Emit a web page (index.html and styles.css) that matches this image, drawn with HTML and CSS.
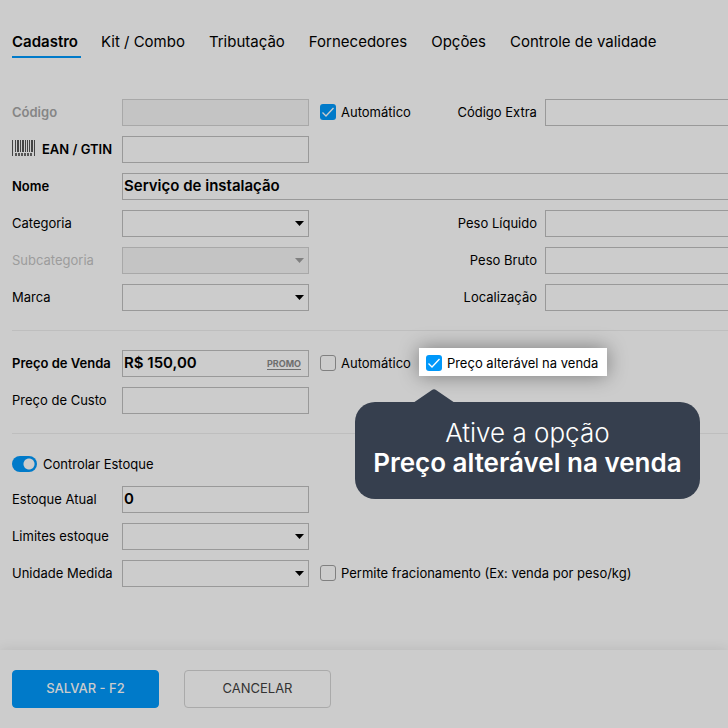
FILE: index.html
```html
<!DOCTYPE html>
<html lang="pt-BR">
<head>
<meta charset="utf-8">
<meta name="viewport" content="width=device-width, initial-scale=1">
<title>Cadastro de produto</title>
<link rel="stylesheet" href="styles.css">
</head>
<body>
<form class="page">
  <nav class="tabs">
    <a class="tab tab-active" href="#cadastro">Cadastro</a>
    <a class="tab" href="#kit">Kit / Combo</a>
    <a class="tab" href="#tributacao">Tributação</a>
    <a class="tab" href="#fornecedores">Fornecedores</a>
    <a class="tab" href="#opcoes">Opções</a>
    <a class="tab" href="#validade">Controle de validade</a>
  </nav>

  <section class="group">
    <div class="row">
      <label class="label label-muted" for="codigo">Código</label>
      <input class="field" id="codigo" type="text" disabled>
      <div class="option">
        <label class="check"><input class="box" type="checkbox" checked>Automático</label>
      </div>
      <label class="label-end" for="extra">Código Extra</label>
      <input class="field-side" id="extra" type="text">
    </div>
    <div class="row">
      <label class="label label-strong label-icon" for="ean">
        <svg class="barcode" viewBox="0 0 23 17" aria-hidden="true">
          <path d="M.5 0v16M22.5 0v16" stroke="#444"/>
          <path d="M3 0h1v12H3zM5 0h2v12H5zM8 0h1v12H8zM10 0h2v12h-2zM13 0h1v12h-1zM15 0h1v12h-1zM17 0h1v12h-1zM19 0h2v12h-2z" fill="#444"/>
          <path d="M3 14.5h17" stroke="#555" stroke-width="3" stroke-dasharray="2 1"/>
        </svg>
        EAN / GTIN
      </label>
      <input class="field" id="ean" type="text">
    </div>
    <div class="row">
      <label class="label label-strong" for="nome">Nome</label>
      <input class="field field-wide" id="nome" type="text" value="Serviço de instalação">
    </div>
    <div class="row">
      <label class="label" for="categoria">Categoria</label>
      <select class="field" id="categoria"></select>
      <label class="label-end label-far" for="liquido">Peso Líquido</label>
      <input class="field-side" id="liquido" type="text">
    </div>
    <div class="row">
      <label class="label label-disabled" for="subcategoria">Subcategoria</label>
      <select class="field" id="subcategoria" disabled></select>
      <label class="label-end label-far" for="bruto">Peso Bruto</label>
      <input class="field-side" id="bruto" type="text">
    </div>
    <div class="row">
      <label class="label" for="marca">Marca</label>
      <select class="field" id="marca"></select>
      <label class="label-end label-far" for="local">Localização</label>
      <input class="field-side" id="local" type="text">
    </div>
  </section>

  <section class="group group-ruled">
    <div class="row">
      <label class="label label-strong" for="venda">Preço de Venda</label>
      <div class="price">
        <input class="field" id="venda" type="text" value="R$ 150,00">
        <a class="promo" href="#promo">PROMO</a>
      </div>
      <div class="option">
        <label class="check"><input class="box" type="checkbox">Automático</label>
      </div>
      <div class="spot">
        <label class="check"><input class="box" type="checkbox" checked>Preço alterável na venda</label>
        <div class="tip" role="tooltip">
          <svg class="tip-arrow" viewBox="0 0 42 14" aria-hidden="true"><path d="M0 14 19 1q2-1.500 4 0l19 13z" fill="#363f4e"/></svg>
          Ative a opção<br><strong>Preço alterável na venda</strong>
        </div>
      </div>
    </div>
    <div class="row">
      <label class="label" for="custo">Preço de Custo</label>
      <input class="field" id="custo" type="text">
    </div>
  </section>

  <section class="group group-ruled group-stock">
    <label class="switch"><input class="toggle" type="checkbox" role="switch" checked>Controlar Estoque</label>
    <div class="row">
      <label class="label" for="estoque">Estoque Atual</label>
      <input class="field" id="estoque" type="text" value="0">
    </div>
    <div class="row">
      <label class="label" for="limites">Limites estoque</label>
      <select class="field" id="limites"></select>
    </div>
    <div class="row">
      <label class="label" for="unidade">Unidade Medida</label>
      <select class="field" id="unidade"></select>
      <div class="option">
        <label class="check"><input class="box" type="checkbox">Permite fracionamento (Ex: venda por peso/kg)</label>
      </div>
    </div>
  </section>

  <footer class="actions">
    <button class="button button-primary" type="submit">SALVAR - F2</button>
    <button class="button" type="button">CANCELAR</button>
  </footer>
</form>
</body>
</html>
```
FILE: styles.css
```css
* {
  box-sizing: border-box;
}

body {
  margin: 0;
  background: #ccc;
  color: #000;
  font: 13px/16px Inter, "Liberation Sans", sans-serif;
}

.page {
  display: flex;
  flex-direction: column;
  min-height: 100vh;
  overflow: hidden;
}

.tabs {
  display: flex;
  gap: 24px;
  padding: 32px 12px 0;
}

.tab {
  padding-bottom: 4px;
  border-bottom: 2px solid transparent;
  color: #000;
  font-size: 15px;
  line-height: 20px;
  text-decoration: none;
  white-space: nowrap;
}

.tab-active {
  margin-right: -4px;
  padding-right: 3px;
  border-color: #007ac9;
  font-weight: 600;
}

.group {
  display: flex;
  flex-direction: column;
  gap: 10px;
  margin: 0 -1px 0 12px;
  padding: 41px 0 19px;
}

.group-ruled {
  padding-top: 19px;
  border-top: 1px solid #bebebe;
}

.group-stock {
  padding-top: 22px;
}

.row {
  display: flex;
  align-items: center;
  height: 27px;
}

.label,
.label-end,
.option {
  flex: none;
  padding-bottom: 2px;
  white-space: nowrap;
}

.label {
  width: 110px;
}

.label-strong {
  font-weight: 600;
}

.label-muted {
  color: #858585;
  font-weight: 600;
}

.label-disabled {
  color: #9c9c9c;
}

.label-icon {
  display: flex;
  align-items: center;
  gap: 7px;
}

.barcode {
  width: 23px;
  height: 17px;
}

.label-end {
  width: 134px;
  padding-right: 8px;
  text-align: right;
}

.label-far {
  width: 236px;
}

.field,
.field-side {
  height: 27px;
  margin: 0;
  padding: 0 1px 2px;
  border: 1px solid #999;
  border-radius: 0;
  background: transparent;
  color: #000;
  font: 600 15px/20px Inter, "Liberation Sans", sans-serif;
}

.field {
  flex: none;
  width: 187px;
}

.field-wide,
.field-side {
  flex: 1;
  min-width: 0;
}

.field:disabled {
  border-color: #a8a8a8;
  background-color: #c4c4c4;
  opacity: 1;
}

select.field {
  appearance: none;
  background: url("data:image/svg+xml,%3Csvg xmlns='http://www.w3.org/2000/svg' width='9' height='5'%3E%3Cpath d='M0 0h9L4.500 5z'/%3E%3C/svg%3E") no-repeat right 4px center;
}

select.field:disabled {
  background: #c4c4c4 url("data:image/svg+xml,%3Csvg xmlns='http://www.w3.org/2000/svg' width='9' height='5'%3E%3Cpath d='M0 0h9L4.500 5z' fill='%23808080'/%3E%3C/svg%3E") no-repeat right 4px center;
}

.price {
  position: relative;
  display: flex;
}

.promo {
  position: absolute;
  top: 7px;
  right: 8px;
  color: #6e6e6e;
  font-size: 9px;
  font-weight: 700;
  line-height: 14px;
  text-underline-offset: 2px;
}

.option {
  margin-left: 11px;
}

.check {
  display: flex;
  align-items: center;
  gap: 5px;
  white-space: nowrap;
}

.box {
  appearance: none;
  width: 16px;
  height: 16px;
  margin: 0;
  border: 1px solid #808080;
  border-radius: 3px;
}

.box:checked {
  border: 0;
  background: #007ac9 url("data:image/svg+xml,%3Csvg xmlns='http://www.w3.org/2000/svg' width='16' height='16'%3E%3Cpath d='M2.500 8.500 6 12l7.500-8' fill='none' stroke='%23ccc' stroke-width='1.300'/%3E%3C/svg%3E") center;
}

.spot {
  position: relative;
  margin: 0 0 3px 8px;
  padding: 7px 9px 5px 7px;
  background: #fff;
  box-shadow: 0 0 20px rgba(0, 0, 0, 0.4);
}

.spot .box {
  background: #0098fa url("data:image/svg+xml,%3Csvg xmlns='http://www.w3.org/2000/svg' width='16' height='16'%3E%3Cpath d='M2.500 8.500 6 12l7.500-8' fill='none' stroke='white' stroke-width='1.300'/%3E%3C/svg%3E") center;
}

.tip {
  position: absolute;
  top: 54px;
  left: -64px;
  z-index: 1;
  width: 345px;
  padding: 16px 0 21px;
  border-radius: 20px;
  background: #363f4e;
  color: #fff;
  font-size: 26px;
  font-weight: 300;
  line-height: 30px;
  text-align: center;
  white-space: nowrap;
}

.tip strong {
  font-weight: 600;
}

.tip-arrow {
  position: absolute;
  top: -13px;
  left: 58px;
  width: 42px;
  height: 14px;
}

.switch {
  display: flex;
  align-items: center;
  gap: 6px;
  margin-bottom: 4px;
}

.toggle {
  appearance: none;
  width: 25px;
  height: 16px;
  margin: 0;
  border-radius: 8px;
  background: radial-gradient(circle at 17px 8px, #ccc 5px, #007ac9 6px);
}

.actions {
  display: flex;
  flex: 1;
  gap: 25px;
  align-items: flex-start;
  margin-top: 44px;
  padding: 20px 12px;
  box-shadow: 0 0 12px rgba(0, 0, 0, 0.1);
}

.button {
  width: 147px;
  height: 38px;
  padding: 0 0 2px;
  border: 1px solid #aaa;
  border-radius: 4px;
  background: transparent;
  color: #333;
  font: 13px/16px Inter, "Liberation Sans", sans-serif;
}

.button-primary {
  border-color: #007ac9;
  background: #007ac9;
  color: #ccc;
  font-weight: 500;
}
```
